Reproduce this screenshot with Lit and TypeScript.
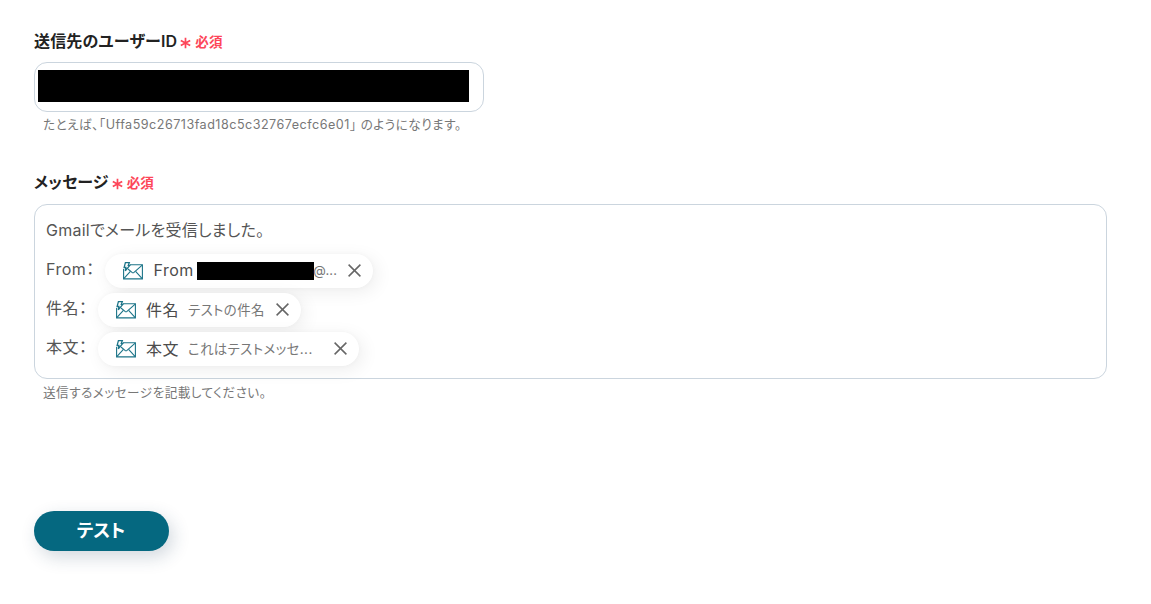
import { LitElement, html, css, nothing } from 'lit';
import { customElement, property } from 'lit/decorators.js';

interface MessageField {
  label: string;
  name: string;
  sample: string;
  masked?: boolean;
}

/**
 * @element field-label
 * @description A form label followed by the "required" marker.
 */
@customElement('field-label')
export class FieldLabel extends LitElement {
  static styles = css`
    :host {
      display: flex;
      align-items: center;
      height: 24px;
      color: #222;
      font-size: 16px;
      font-weight: 600;
      letter-spacing: 0.01em;
      white-space: nowrap;
    }

    .required {
      display: flex;
      align-items: center;
      gap: 4px;
      margin: 2px 0 0 3px;
      color: #fd4659;
      font-size: 13.5px;
      font-weight: 600;
    }

    .required svg {
      width: 11px;
      height: 12px;
      margin-top: 3px;
    }
  `;

  @property({ type: String })
  text = '';

  render() {
    return html`
      <span>${this.text}</span>
      <span class="required">
        <svg viewBox="0 0 11 12" fill="none" stroke="currentColor" stroke-width="1.7">
          <path d="M5.5 0.8v10.4M0.8 3.4l9.4 5.2M10.2 3.4L0.8 8.6"/>
        </svg>
        <span>必須</span>
      </span>
    `;
  }
}

/**
 * @element field-chip
 * @description A removable chip that stands for a value from the mail trigger.
 */
@customElement('field-chip')
export class FieldChip extends LitElement {
  static styles = css`
    :host {
      display: flex;
      align-items: center;
      box-sizing: border-box;
      height: 34px;
      padding: 0 12px 0 18px;
      border-radius: 17px;
      background: #fff;
      box-shadow: 4px 4px 18px rgba(0, 0, 0, 0.07), 0 0 5px rgba(0, 0, 0, 0.03);
      white-space: nowrap;
    }

    .mail {
      width: 20px;
      height: 18px;
      margin-right: 10px;
      color: #1c7488;
      flex-shrink: 0;
    }

    .name {
      margin: -2px 9px 0 0;
      color: #4c4c4c;
    }

    .name--masked {
      margin: -1px 3.5px 0 0.5px;
    }

    .mask {
      width: 117px;
      height: 18px;
      background: #000;
    }

    .sample {
      margin-top: -2px;
      color: #777;
      font-size: 13.4px;
      letter-spacing: 0.033em;
    }

    .sample--masked {
      margin: -1px 0 0 -1px;
      font-size: 13px;
      letter-spacing: 0.01em;
    }

    .close {
      width: 13px;
      height: 13px;
      margin-left: auto;
      color: #666;
      flex-shrink: 0;
    }
  `;

  @property({ type: String })
  name = '';

  @property({ type: String })
  sample = '';

  @property({ type: Boolean })
  masked = false;

  render() {
    return html`
      <svg class="mail" viewBox="0 0 20 18" fill="none" stroke="currentColor" stroke-width="1.1">
        <path d="M7 2.8H19.4V16.9H.6V7"/>
        <path d="M19.2 3.1L11 10.4Q10 11.2 9 10.4L5 7"/>
        <path d="M.8 16.7L7.4 9.4M19.2 16.7L12.6 9.4"/>
        <path d="M2.4.7H6.3L5.3 3.3H6.8L2.3 8.9L2.9 5.5H1.1Z" stroke-width="1.3"/>
      </svg>
      <span class="name ${this.masked ? 'name--masked' : ''}">${this.name}</span>
      ${this.masked ? html`<span class="mask"></span>` : nothing}
      <span class="sample ${this.masked ? 'sample--masked' : ''}">${this.sample}</span>
      <svg class="close" viewBox="0 0 13 13" fill="none" stroke="currentColor" stroke-width="1.5">
        <path d="M.6.6l11.8 11.8M12.4.6L.6 12.4"/>
      </svg>
    `;
  }
}

@customElement('app-root')
export class AppRoot extends LitElement {
  static styles = css`
    :host {
      display: block;
      box-sizing: border-box;
      height: 604px;
      padding: 28px 44px 0 34px;
      overflow: hidden;
      background: #fff;
      font-family: Inter, 'Noto Sans CJK JP', sans-serif;
      font-feature-settings: 'palt';
      letter-spacing: 0.03em;
    }

    .input {
      display: flex;
      align-items: center;
      box-sizing: border-box;
      width: 450px;
      height: 50px;
      margin-top: 10px;
      padding: 0 3px 2px;
      border: 1px solid #cbd5de;
      border-radius: 13px;
    }

    .input__mask {
      width: 431px;
      height: 32px;
      background: #000;
    }

    .hint {
      height: 20px;
      margin: 3px 0 0 9px;
      color: #777;
      font-size: 12.6px;
      line-height: 20px;
      white-space: nowrap;
    }

    .message-label {
      margin-top: 34px;
    }

    .editor {
      box-sizing: border-box;
      height: 175px;
      margin-top: 11px;
      padding: 8px 11px 0;
      border: 1px solid #cbd5de;
      border-radius: 13px;
      color: #555;
      font-size: 16px;
    }

    .editor + .hint {
      margin-top: 4px;
    }

    .line {
      display: flex;
      align-items: center;
      height: 39px;
      white-space: nowrap;
    }

    .line--text {
      height: 32px;
      margin-bottom: 4px;
      letter-spacing: 0.016em;
    }

    .line__label {
      width: 52px;
      margin-top: -1px;
    }

    .line__label--wide {
      width: 59px;
    }

    field-chip {
      margin-top: 4px;
    }

    .chip--from {
      width: 268px;
    }

    .chip--subject {
      width: 203px;
    }

    .chip--body {
      width: 261px;
    }

    .button {
      display: block;
      width: 135px;
      height: 40px;
      margin-top: 108px;
      padding: 0 1px 4px 0;
      border: 0;
      border-radius: 20px;
      background: #056880;
      box-shadow: 4px 6px 18px rgba(30, 60, 90, 0.2);
      color: #fff;
      font: inherit;
      font-size: 18px;
      font-weight: 700;
      letter-spacing: 0;
    }
  `;

  private fields: MessageField[] = [
    { label: 'From：', name: 'From', sample: '@...', masked: true },
    { label: '件名：', name: '件名', sample: 'テストの件名' },
    { label: '本文：', name: '本文', sample: 'これはテストメッセ...' },
  ];

  private chipClasses = ['chip--from', 'chip--subject', 'chip--body'];

  private renderLine(field: MessageField, index: number) {
    return html`
      <div class="line">
        <span class="line__label ${field.masked ? 'line__label--wide' : ''}">${field.label}</span>
        <field-chip
          class=${this.chipClasses[index]}
          name=${field.name}
          sample=${field.sample}
          ?masked=${field.masked}
        ></field-chip>
      </div>
    `;
  }

  render() {
    return html`
      <field-label text="送信先のユーザーID"></field-label>
      <div class="input"><span class="input__mask"></span></div>
      <div class="hint">たとえば、「Uffa59c26713fad18c5c32767ecfc6e01」 のようになります。</div>

      <field-label class="message-label" text="メッセージ"></field-label>
      <div class="editor">
        <div class="line line--text">Gmailでメールを受信しました。</div>
        ${this.fields.map((field, index) => this.renderLine(field, index))}
      </div>
      <div class="hint">送信するメッセージを記載してください。</div>

      <button class="button">テスト</button>
    `;
  }
}

declare global {
  interface HTMLElementTagNameMap {
    'app-root': AppRoot;
    'field-label': FieldLabel;
    'field-chip': FieldChip;
  }
}
